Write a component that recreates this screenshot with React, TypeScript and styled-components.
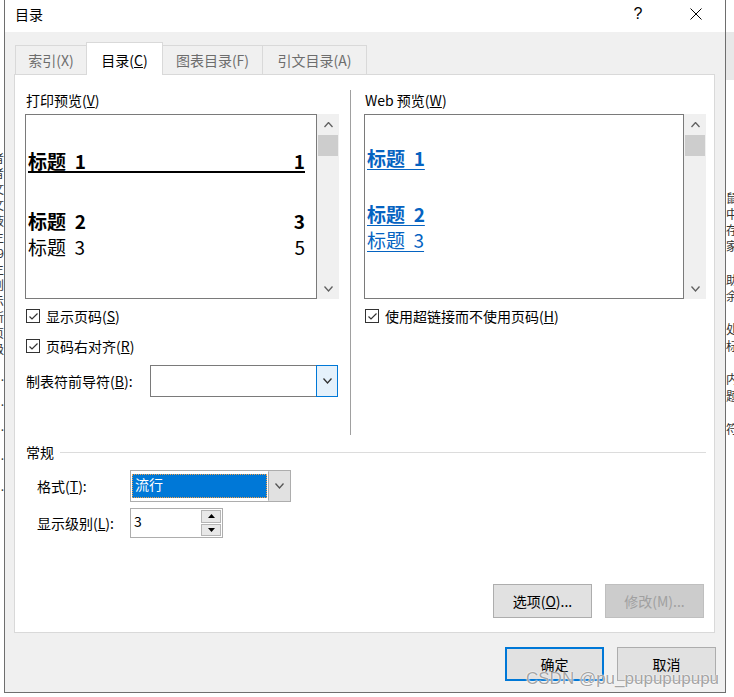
import React from 'react';
import styled, { createGlobalStyle } from 'styled-components';

const GlobalStyle = createGlobalStyle`
  html, body { margin: 0; padding: 0; background: #ffffff; }
  body {
    font-family: "Noto Sans CJK SC", "Noto Sans", sans-serif;
    font-size: 14px;
    color: #000;
  }
  #root { width: 734px; height: 697px; }
`;

const Screen = styled.div`
  position: relative;
  width: 734px;
  height: 697px;
  display: flex;
  overflow: hidden;
  background: #fff;
`;

const DocStrip = styled.div<{ $w: number }>`
  width: ${(p) => p.$w}px;
  flex-shrink: 0;
  overflow: hidden;
  display: flex;
  flex-direction: column;
  background: #fff;
`;

const DocBand = styled.div`
  height: 48px;
  margin-top: 32px;
  background: #e8e8e8;
  flex-shrink: 0;
`;

const DocLine = styled.div<{ $mt: number; $right?: boolean }>`
  margin-top: ${(p) => p.$mt}px;
  height: 15px;
  line-height: 15px;
  font-size: 12px;
  color: #333;
  white-space: nowrap;
  overflow: hidden;
  display: flex;
  justify-content: ${(p) => (p.$right ? 'flex-end' : 'flex-start')};
  flex-shrink: 0;
`;

const Dialog = styled.div`
  width: 722px;
  height: 693px;
  flex-shrink: 0;
  box-sizing: border-box;
  border: 1px solid #6e6e6e;
  border-top: none;
  background: #f0f0f0;
  display: flex;
  flex-direction: column;
`;

const TitleBar = styled.div`
  height: 32px;
  box-sizing: border-box;
  padding: 0 0 4px 10px;
  flex-shrink: 0;
  background: #fff;
  display: flex;
  align-items: center;
`;

const TitleText = styled.div`
  flex: 1;
  font-size: 14px;
  line-height: 20px;
`;

const TitleButton = styled.div<{ $mr: number }>`
  width: 46px;
  height: 28px;
  margin-right: ${(p) => p.$mr}px;
  display: flex;
  align-items: center;
  justify-content: center;
  font-family: "Liberation Sans", sans-serif;
  font-size: 16px;
`;

const Body = styled.div`
  flex: 1;
  display: flex;
  flex-direction: column;
  padding: 10px 10px 0 9px;
`;

const TabStrip = styled.div`
  height: 32px;
  display: flex;
  align-items: flex-end;
  margin-left: 1px;
  position: relative;
  z-index: 1;
`;

const Tab = styled.div<{ $w: number; $active?: boolean; $first?: boolean }>`
  width: ${(p) => p.$w}px;
  height: ${(p) => (p.$active ? 33 : 29)}px;
  margin-bottom: ${(p) => (p.$active ? -1 : 0)}px;
  margin-left: ${(p) => (p.$first ? 0 : -1)}px;
  padding-top: ${(p) => (p.$active ? 2 : 0)}px;
  box-sizing: border-box;
  border: 1px solid #d9d9d9;
  border-bottom: none;
  background: ${(p) => (p.$active ? '#fff' : '#f0f0f0')};
  color: ${(p) => (p.$active ? '#000' : '#6d6d6d')};
  display: flex;
  align-items: center;
  justify-content: center;
  font-size: 14px;
`;

const Panel = styled.div`
  height: 559px;
  box-sizing: border-box;
  border: 1px solid #d9d9d9;
  background: #fff;
  padding: 15px 8px 14px 10px;
  display: flex;
  flex-direction: column;
`;

const TopSection = styled.div`
  height: 345px;
  display: flex;
  flex-shrink: 0;
`;

const Column = styled.div<{ $w: number; $ml?: number }>`
  width: ${(p) => p.$w}px;
  margin-left: ${(p) => p.$ml || 0}px;
  display: flex;
  flex-direction: column;
`;

const Divider = styled.div`
  width: 1px;
  margin-left: 11px;
  background: #a0a0a0;
`;

const SectionLabel = styled.div`
  height: 20px;
  line-height: 20px;
  padding-left: 1px;
  font-size: 14px;
`;

const PreviewRow = styled.div`
  margin-top: 4px;
  height: 185px;
  display: flex;
`;

const PreviewBox = styled.div<{ $pad: string }>`
  flex: 1;
  box-sizing: border-box;
  border: 1px solid #7a7a7a;
  background: #fff;
  padding: ${(p) => p.$pad};
  display: flex;
  flex-direction: column;
  overflow: hidden;
`;

const Scrollbar = styled.div`
  width: 22px;
  background: #f0f0f0;
  display: flex;
  flex-direction: column;
  align-items: center;
`;

const ScrollArrow = styled.div`
  height: 21px;
  width: 100%;
  display: flex;
  align-items: center;
  justify-content: center;
`;

const ScrollThumb = styled.div`
  width: 20px;
  height: 21px;
  background: #cdcdcd;
`;

const Spacer = styled.div`
  flex: 1;
`;

const TocLine = styled.div<{ $bold?: boolean; $rule?: boolean; $mt: number; $h: number }>`
  margin-top: ${(p) => p.$mt}px;
  height: ${(p) => p.$h}px;
  line-height: ${(p) => p.$h}px;
  font-size: 19px;
  font-weight: ${(p) => (p.$bold ? 700 : 400)};
  display: flex;
  justify-content: space-between;
  white-space: pre;
  border-bottom: ${(p) => (p.$rule ? '2px solid #000' : 'none')};
  flex-shrink: 0;
`;

const WebLine = styled.div<{ $bold?: boolean; $mt: number }>`
  margin-top: ${(p) => p.$mt}px;
  height: 26px;
  line-height: 26px;
  font-size: 19px;
  font-weight: ${(p) => (p.$bold ? 700 : 400)};
  color: #0563c1;
  white-space: pre;
  flex-shrink: 0;
`;

const WebLink = styled.span`
  text-decoration: underline;
  text-underline-offset: 3px;
`;

const CheckRow = styled.div<{ $mt: number }>`
  margin-top: ${(p) => p.$mt}px;
  height: 20px;
  display: flex;
  align-items: center;
  padding-left: 1px;
  font-size: 14px;
`;

const CheckBoxBox = styled.div`
  width: 14px;
  height: 14px;
  box-sizing: border-box;
  border: 1px solid #333;
  background: #fff;
  display: flex;
  align-items: center;
  justify-content: center;
  margin-right: 6px;
  flex-shrink: 0;
`;

const LeaderRow = styled.div`
  margin-top: 9px;
  height: 32px;
  display: flex;
  align-items: center;
`;

const FieldLabel = styled.div<{ $w: number }>`
  width: ${(p) => p.$w}px;
  flex-shrink: 0;
  font-size: 14px;
  line-height: 20px;
  padding-left: 1px;
  box-sizing: border-box;
`;

const Combo = styled.div<{ $w: number; $border: string }>`
  width: ${(p) => p.$w}px;
  height: 32px;
  box-sizing: border-box;
  border: 1px solid ${(p) => p.$border};
  background: #fff;
  display: flex;
`;

const ComboField = styled.div`
  flex: 1;
  display: flex;
  align-items: center;
  padding: 3px 1px 3px 1px;
`;

const Highlight = styled.div`
  flex: 1;
  height: 100%;
  box-sizing: border-box;
  background: #0078d7;
  border: 1px dotted #f2a14a;
  color: #fff;
  font-size: 14px;
  line-height: 19px;
  padding-left: 2px;
`;

const ComboButton = styled.div<{ $focus?: boolean }>`
  width: 22px;
  box-sizing: border-box;
  margin: ${(p) => (p.$focus ? '-1px -1px -1px 0' : '0')};
  border: 1px solid ${(p) => (p.$focus ? '#0078d7' : '#e1e1e1')};
  border-left: 1px solid ${(p) => (p.$focus ? '#0078d7' : '#adadad')};
  background: ${(p) => (p.$focus ? '#e5f1fb' : '#e1e1e1')};
  display: flex;
  align-items: center;
  justify-content: center;
`;

const GeneralHeader = styled.div`
  margin-top: 7px;
  height: 20px;
  display: flex;
  align-items: center;
  padding-left: 1px;
  font-size: 14px;
`;

const HeaderRule = styled.div`
  flex: 1;
  height: 1px;
  margin-left: 6px;
  background: #dcdcdc;
`;

const FieldRow = styled.div<{ $mt: number; $h: number }>`
  margin-top: ${(p) => p.$mt}px;
  height: ${(p) => p.$h}px;
  display: flex;
  align-items: center;
  padding-left: 11px;
`;

const Spin = styled.div`
  width: 93px;
  height: 30px;
  box-sizing: border-box;
  border: 1px solid #adadad;
  background: #fff;
  display: flex;
`;

const SpinText = styled.div`
  flex: 1;
  padding: 1px 0 0 3px;
  font-size: 14px;
  line-height: 22px;
`;

const SpinButtons = styled.div`
  width: 20px;
  display: flex;
  flex-direction: column;
  padding: 1px 1px 1px 0;
  gap: 1px;
`;

const SpinButton = styled.div`
  flex: 1;
  box-sizing: border-box;
  border: 1px solid #b5b5b5;
  background: #e8e8e8;
  display: flex;
  align-items: center;
  justify-content: center;
`;

const ButtonRow = styled.div<{ $mt?: string; $mr: number }>`
  margin-top: ${(p) => p.$mt || 'auto'};
  margin-right: ${(p) => p.$mr}px;
  display: flex;
  justify-content: flex-end;
  gap: 13px;
`;

const PushButton = styled.div<{ $disabled?: boolean; $default?: boolean }>`
  width: 99px;
  height: 34px;
  box-sizing: border-box;
  border: ${(p) => (p.$default ? '2px solid #0078d7' : p.$disabled ? '1px solid #bfbfbf' : '1px solid #adadad')};
  background: ${(p) => (p.$disabled ? '#cccccc' : '#e1e1e1')};
  color: ${(p) => (p.$disabled ? '#a0a0a0' : '#000')};
  display: flex;
  align-items: center;
  justify-content: center;
  font-size: 14px;
`;

const Watermark = styled.div`
  position: absolute;
  left: 526px;
  top: 669px;
  font-family: "Liberation Sans", sans-serif;
  font-size: 17px;
  line-height: 20px;
  color: rgba(140, 140, 140, 0.8);
  text-shadow: 0 0 2px #fff, 0 0 1px #fff;
  white-space: nowrap;
`;

const Check = () => (
  <svg width="11" height="11" viewBox="0 0 11 11">
    <polyline points="1.5,5.5 4,8 9.5,2.5" fill="none" stroke="#333" strokeWidth="1.2" />
  </svg>
);

const Chevron = ({ up, color = '#606060', w = 9 }: { up?: boolean; color?: string; w?: number }) => (
  <svg width={w} height={Math.ceil(w / 2) + 1} viewBox={`0 0 ${w} ${Math.ceil(w / 2) + 1}`}>
    <polyline
      points={
        up
          ? `0.5,${Math.ceil(w / 2)} ${w / 2},0.5 ${w - 0.5},${Math.ceil(w / 2)}`
          : `0.5,0.5 ${w / 2},${Math.ceil(w / 2)} ${w - 0.5},0.5`
      }
      fill="none"
      stroke={color}
      strokeWidth="1.3"
    />
  </svg>
);

const Tri = ({ up }: { up?: boolean }) => (
  <svg width="7" height="4" viewBox="0 0 7 4">
    <polygon points={up ? '0,4 3.5,0 7,4' : '0,0 3.5,4 7,0'} fill="#000" />
  </svg>
);

const CloseIcon = () => (
  <svg width="12" height="12" viewBox="0 0 12 12">
    <line x1="0.5" y1="0.5" x2="11.5" y2="11.5" stroke="#000" strokeWidth="1" />
    <line x1="11.5" y1="0.5" x2="0.5" y2="11.5" stroke="#000" strokeWidth="1" />
  </svg>
);

const ScrollBar = () => (
  <Scrollbar>
    <ScrollArrow>
      <Chevron up />
    </ScrollArrow>
    <ScrollThumb />
    <Spacer />
    <ScrollArrow>
      <Chevron />
    </ScrollArrow>
  </Scrollbar>
);

const leftDoc: [number, string][] = [
  [232, '者'], [0, '者'], [1, '文'], [1, '文'], [1, '液'], [1, '主'], [1, '9'], [1, '主'],
  [1, '创'], [1, '示'], [1, '所'], [1, '页'], [1, '级'], [12, '.'], [10, '.'], [10, '.'], [14, '.'], [16, '.'],
];

const rightDoc: [number, string][] = [
  [110, '鼠'], [1, '中'], [1, '存'], [1, '家'], [19, '助'], [1, '余'], [18, '处'], [2, '标'],
  [18, '内'], [2, '题'], [18, '符'],
];

export default function App() {
  return (
    <Screen>
      <GlobalStyle />
      <DocStrip $w={4}>
        {leftDoc.map(([mt, t], i) => (
          <DocLine key={i} $mt={i === 0 ? 150 : mt} $right>
            {t}
          </DocLine>
        ))}
      </DocStrip>
      <Dialog>
        <TitleBar>
          <TitleText>目录</TitleText>
          <TitleButton $mr={12}>?</TitleButton>
          <TitleButton $mr={6}>
            <CloseIcon />
          </TitleButton>
        </TitleBar>
        <Body>
          <TabStrip>
            <Tab $w={72} $first>索引(X)</Tab>
            <Tab $w={77} $active>
              <span>
                目录(<u>C</u>)
              </span>
            </Tab>
            <Tab $w={101}>图表目录(F)</Tab>
            <Tab $w={105}>引文目录(A)</Tab>
          </TabStrip>
          <Panel>
            <TopSection>
              <Column $w={314}>
                <SectionLabel>
                  打印预览(<u>V</u>)
                </SectionLabel>
                <PreviewRow>
                  <PreviewBox $pad="35px 11px 0 2px">
                    <TocLine $bold $rule $mt={0} $h={21}>
                      <span>标题  1</span>
                      <span>1</span>
                    </TocLine>
                    <TocLine $bold $mt={35} $h={26}>
                      <span>标题  2</span>
                      <span>3</span>
                    </TocLine>
                    <TocLine $mt={0} $h={26}>
                      <span>标题  3</span>
                      <span>5</span>
                    </TocLine>
                  </PreviewBox>
                  <ScrollBar />
                </PreviewRow>
                <CheckRow $mt={7}>
                  <CheckBoxBox>
                    <Check />
                  </CheckBoxBox>
                  <span>
                    显示页码(<u>S</u>)
                  </span>
                </CheckRow>
                <CheckRow $mt={10}>
                  <CheckBoxBox>
                    <Check />
                  </CheckBoxBox>
                  <span>
                    页码右对齐(<u>R</u>)
                  </span>
                </CheckRow>
                <LeaderRow>
                  <FieldLabel $w={125}>
                    制表符前导符(<u>B</u>):
                  </FieldLabel>
                  <Combo $w={188} $border="#7a7a7a">
                    <ComboField />
                    <ComboButton $focus>
                      <Chevron color="#333" w={9} />
                    </ComboButton>
                  </Combo>
                </LeaderRow>
              </Column>
              <Divider />
              <Column $w={342} $ml={13}>
                <SectionLabel>
                  Web 预览(<u>W</u>)
                </SectionLabel>
                <PreviewRow>
                  <PreviewBox $pad="30px 2px 0 2px">
                    <WebLine $bold $mt={0}>
                      <WebLink>标题  1</WebLink>
                    </WebLine>
                    <WebLine $bold $mt={30}>
                      <WebLink>标题  2</WebLink>
                    </WebLine>
                    <WebLine $mt={0}>
                      <WebLink>标题  3</WebLink>
                    </WebLine>
                  </PreviewBox>
                  <ScrollBar />
                </PreviewRow>
                <CheckRow $mt={7}>
                  <CheckBoxBox>
                    <Check />
                  </CheckBoxBox>
                  <span>
                    使用超链接而不使用页码(<u>H</u>)
                  </span>
                </CheckRow>
              </Column>
            </TopSection>
            <GeneralHeader>
              <span>常规</span>
              <HeaderRule />
            </GeneralHeader>
            <FieldRow $mt={8} $h={32}>
              <FieldLabel $w={94}>
                格式(<u>T</u>):
              </FieldLabel>
              <Combo $w={161} $border="#adadad">
                <ComboField>
                  <Highlight>流行</Highlight>
                </ComboField>
                <ComboButton>
                  <Chevron color="#555" w={9} />
                </ComboButton>
              </Combo>
            </FieldRow>
            <FieldRow $mt={6} $h={30}>
              <FieldLabel $w={94}>
                显示级别(<u>L</u>):
              </FieldLabel>
              <Spin>
                <SpinText>3</SpinText>
                <SpinButtons>
                  <SpinButton>
                    <Tri up />
                  </SpinButton>
                  <SpinButton>
                    <Tri />
                  </SpinButton>
                </SpinButtons>
              </Spin>
            </FieldRow>
            <ButtonRow $mr={2}>
              <PushButton>
                <span>
                  选项(<u>O</u>)...
                </span>
              </PushButton>
              <PushButton $disabled>修改(M)...</PushButton>
            </ButtonRow>
          </Panel>
          <ButtonRow $mt="14px" $mr={-1}>
            <PushButton $default>确定</PushButton>
            <PushButton>取消</PushButton>
          </ButtonRow>
        </Body>
      </Dialog>
      <DocStrip $w={8}>
        <DocBand />
        {rightDoc.map(([mt, t], i) => (
          <DocLine key={i} $mt={mt}>
            {t}
          </DocLine>
        ))}
      </DocStrip>
      <Watermark>CSDN @pu_pupupupupu</Watermark>
    </Screen>
  );
}
